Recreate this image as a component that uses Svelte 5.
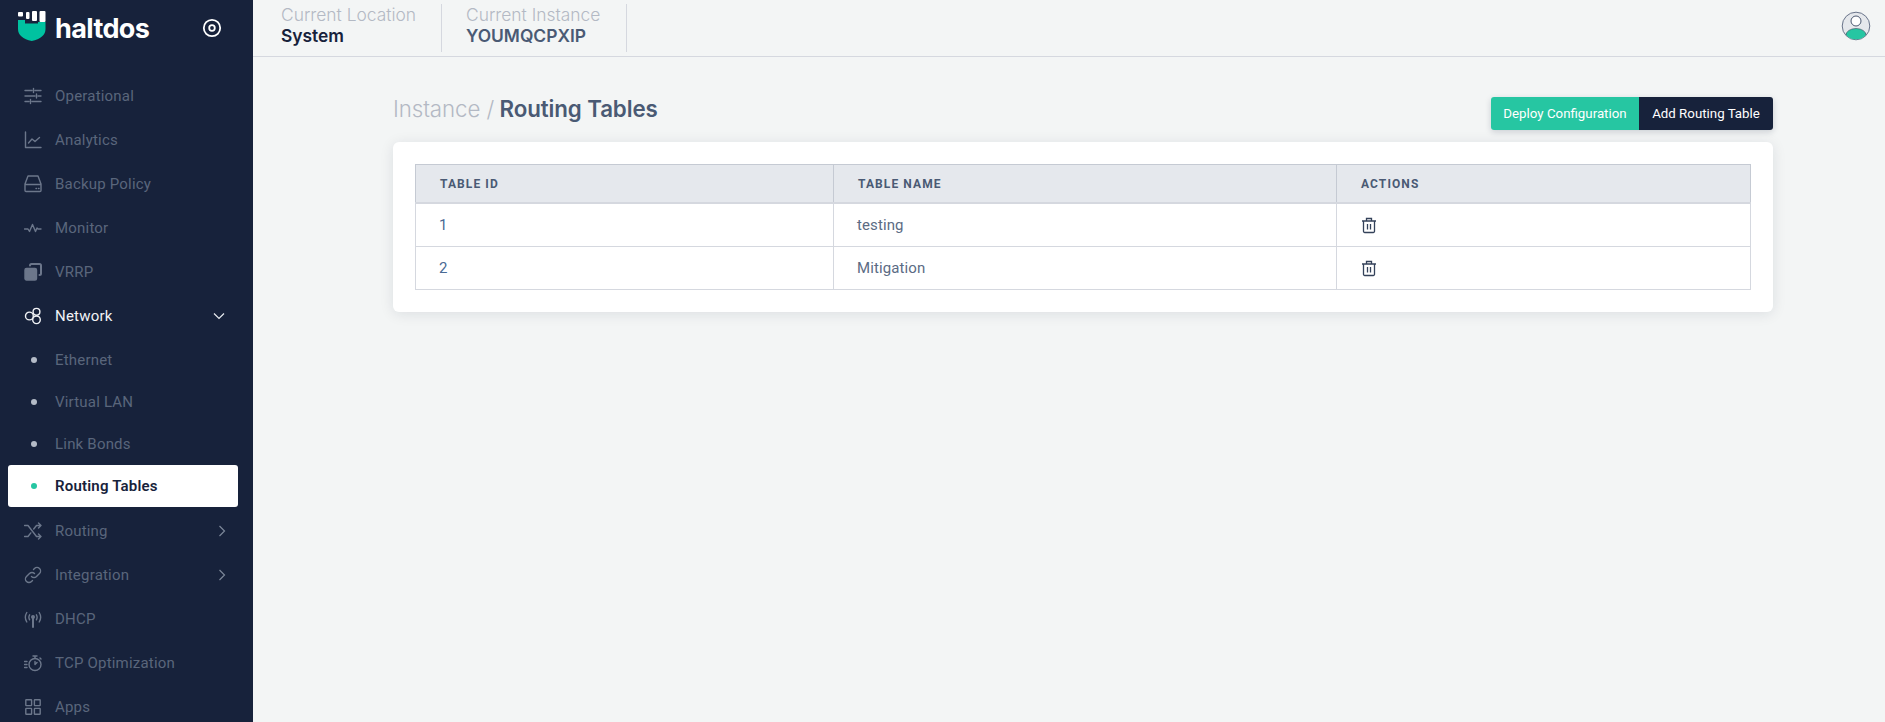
<script lang="ts">
    type Item = { label: string; icon: string; chevron?: string; active?: boolean };

    const topItems: Item[] = [
        { label: 'Operational', icon: 'sliders' },
        { label: 'Analytics', icon: 'chart' },
        { label: 'Backup Policy', icon: 'drive' },
        { label: 'Monitor', icon: 'pulse' },
        { label: 'VRRP', icon: 'copy' },
    ];
    const subItems = ['Ethernet', 'Virtual LAN', 'Link Bonds', 'Routing Tables'];
    const bottomItems: Item[] = [
        { label: 'Routing', icon: 'shuffle', chevron: 'right' },
        { label: 'Integration', icon: 'link', chevron: 'right' },
        { label: 'DHCP', icon: 'antenna' },
        { label: 'TCP Optimization', icon: 'timer' },
        { label: 'Apps', icon: 'grid' },
    ];
    const rows = [
        { id: 1, name: 'testing' },
        { id: 2, name: 'Mitigation' },
    ];
</script>

{#snippet navIcon(name: string)}
    <svg class="nav-icon" viewBox="0 0 18 18" fill="none" stroke="currentColor" stroke-width="1.400" stroke-linecap="round" stroke-linejoin="round">
        {#if name === 'sliders'}
            <path d="M1 3.500h7M11 3.500h6M1 9h10M14 9h3M1 14.500h4M8 14.500h9M9.500 1.500v4M12.500 7v4M6.500 12.500v4" />
        {:else if name === 'chart'}
            <path d="M1.500 1v15.500h15.500M4.500 12l3.500-4 3 2.500 4.500-4" />
        {:else if name === 'drive'}
            <path d="M4 1h10l3 8v6.500a1 1 0 0 1-1 1H2a1 1 0 0 1-1-1V9zM1 9.500h16M12 13.500h.5M14.500 13.500h.5" />
        {:else if name === 'pulse'}
            <path d="M.5 10h3.500l1.500 2.500 3-7 3 7 1.500-3.500 1 1h3" />
        {:else if name === 'copy'}
            <path d="M6 2.500a1.500 1.500 0 0 1 1.500-1.500h8a1.500 1.500 0 0 1 1.500 1.500v8a1.500 1.500 0 0 1-1.500 1.500" stroke-width="2" />
            <rect x="1" y="5.500" width="11.500" height="11.500" rx="1.500" fill="currentColor" />
        {:else if name === 'network'}
            <circle cx="12.500" cy="4.800" r="3.400" />
            <circle cx="12.500" cy="12.800" r="3.800" />
            <circle cx="5.400" cy="9" r="3.900" />
        {:else if name === 'shuffle'}
            <path d="M.5 3.500h3.500l8.500 11h4.500M.5 14.500h3.500l2.800-3.600M9.700 7l2.800-3.500h4.500M14.500 1l2.500 2.500-2.500 2.500M14.500 12l2.500 2.500-2.500 2.500" />
        {:else if name === 'link'}
            <path d="M7.500 10.500a3.500 3.500 0 0 0 5 0l3-3a3.500 3.500 0 0 0-5-5l-1 1M10.500 7.500a3.500 3.500 0 0 0-5 0l-3 3a3.500 3.500 0 0 0 5 5l1-1" />
        {:else if name === 'antenna'}
            <path d="M9 8v9" stroke-width="2" />
            <path d="M2.800 2.500a9 9 0 0 0 0 9.500M15.200 2.500a9 9 0 0 1 0 9.500M5.600 4.800a5 5 0 0 0 0 5M12.400 4.800a5 5 0 0 1 0 5" />
            <circle cx="9" cy="7" r="1.300" fill="currentColor" />
        {:else if name === 'timer'}
            <circle cx="11" cy="10.500" r="6" />
            <path d="M11 7.500v3l2-2M9 2h4M11 2v2.500M16 4l1 1M.5 7.500H3M.5 10.500H3M.5 13.500H3" />
        {:else if name === 'grid'}
            <rect x="1.800" y="1.800" width="5.800" height="5.800" rx=".5" />
            <rect x="10.400" y="1.800" width="5.800" height="5.800" rx=".5" />
            <rect x="1.800" y="10.400" width="5.800" height="5.800" rx=".5" />
            <rect x="10.400" y="10.400" width="5.800" height="5.800" rx=".5" />
        {/if}
    </svg>
{/snippet}

{#snippet navRow(item: Item)}
    <div class="nav-row">
        {@render navIcon(item.icon)}
        <span class="nav-label">{item.label}</span>
        {#if item.chevron === 'right'}
            <svg class="chevron" viewBox="0 0 10 14" fill="none" stroke="currentColor" stroke-width="1.200"><path d="M2.500 2 7.500 7l-5 5" /></svg>
        {/if}
    </div>
{/snippet}

<div class="layout">
    <aside class="sidebar">
        <div class="brand">
            <svg class="logo" viewBox="0 0 28 30">
                <path d="M0 9h7v3.500h13V11h7.500v7c0 6-5 10-13.700 12C5 28 0 24 0 18z" fill="#00c2a0" />
                <rect x="0" y="1" width="5" height="4.500" rx="1" fill="#fff" />
                <rect x="8" y="1" width="3.500" height="7" rx="1" fill="#fff" />
                <rect x="14" y="0" width="5" height="10" rx="1" fill="#fff" />
                <rect x="21.500" y="0" width="6" height="11" rx="1" fill="#fff" />
            </svg>
            <span class="brand-name">haltdos</span>
            <svg class="target" viewBox="0 0 20 20" fill="none" stroke="#fff">
                <circle cx="10" cy="10" r="8.200" stroke-width="1.800" />
                <circle cx="10" cy="10" r="2.800" stroke-width="1.800" />
            </svg>
        </div>
        <nav class="nav">
            {#each topItems as item}
                {@render navRow(item)}
            {/each}
            <div class="nav-row open">
                {@render navIcon('network')}
                <span class="nav-label">Network</span>
                <svg class="chevron" viewBox="0 0 14 10" fill="none" stroke="currentColor" stroke-width="1.200"><path d="M2 2.500 7 7.500l5-5" /></svg>
            </div>
            <div class="sub">
                {#each subItems as sub, i}
                    <div class="sub-row" class:active={i === 3}>
                        <span class="dot"></span>
                        <span>{sub}</span>
                    </div>
                {/each}
            </div>
            {#each bottomItems as item}
                {@render navRow(item)}
            {/each}
        </nav>
    </aside>

    <div class="main">
        <header class="topbar">
            <div class="crumb">
                <span class="crumb-title">Current Location</span>
                <span class="crumb-value">System</span>
            </div>
            <div class="crumb">
                <span class="crumb-title">Current Instance</span>
                <span class="crumb-value muted">YOUMQCPXIP</span>
            </div>
            <svg class="avatar" viewBox="0 0 30 30">
                <circle cx="15" cy="15" r="13.800" fill="#e5e8ec" stroke="#69748a" stroke-width="1" />
                <clipPath id="avatar-clip"><circle cx="15" cy="15" r="13.300" /></clipPath>
                <ellipse cx="15" cy="24" rx="10" ry="6.500" fill="#26c6a2" stroke="#3c4a60" stroke-width=".6" clip-path="url(#avatar-clip)" />
                <circle cx="15" cy="10" r="5" fill="#fff" stroke="#4b5870" stroke-width="1" />
            </svg>
        </header>

        <section class="content">
            <div class="title-row">
                <h1><span class="light">Instance /</span> Routing Tables</h1>
                <div class="actions">
                    <button class="btn green">Deploy Configuration</button>
                    <button class="btn dark">Add Routing Table</button>
                </div>
            </div>
            <div class="card">
                <table>
                    <thead>
                        <tr>
                            <th class="col-id">TABLE ID</th>
                            <th class="col-name">TABLE NAME</th>
                            <th>ACTIONS</th>
                        </tr>
                    </thead>
                    <tbody>
                        {#each rows as row}
                            <tr>
                                <td class="id">{row.id}</td>
                                <td>{row.name}</td>
                                <td>
                                    <svg class="trash" viewBox="0 0 16 16" fill="none" stroke="#34425a" stroke-width="1.300">
                                        <path d="M1 3.500h14M5.500 3.500V1h5v2.500M2.500 3.500v10.300A1.200 1.200 0 0 0 3.700 15h8.600a1.200 1.200 0 0 0 1.200-1.200V3.500M6.500 6.500v5.500M9.500 6.500v5.500" />
                                    </svg>
                                </td>
                            </tr>
                        {/each}
                    </tbody>
                </table>
            </div>
        </section>
    </div>
</div>

<style>
    :global(body) {
        margin: 0;
        background: #f3f5f5;
        font-family: Roboto, "Liberation Sans", sans-serif;
    }
    .layout {
        display: flex;
        height: 722px;
        overflow: hidden;
    }
    .sidebar {
        width: 253px;
        flex: none;
        background: #17223b;
        overflow: hidden;
    }
    .brand {
        display: flex;
        align-items: center;
        height: 56px;
        padding-left: 18px;
    }
    .logo {
        width: 28px;
        height: 30px;
        flex: none;
        margin-top: -4px;
    }
    .brand-name {
        color: #fff;
        font-size: 27px;
        font-weight: 700;
        margin-left: 9px;
        width: 147px;
        font-family: Inter, Roboto, sans-serif;
        letter-spacing: -0.6px;
    }
    .target {
        width: 20px;
        height: 20px;
        margin-top: -1px;
    }
    .nav {
        padding-top: 17.500px;
    }
    .nav-row {
        display: flex;
        align-items: center;
        height: 44.100px;
        padding-left: 24px;
        color: #5a667b;
        font-size: 15px;
        letter-spacing: 0.2px;
    }
    .nav-row.open {
        color: #f1f3f6;
    }
    .nav-icon {
        width: 18px;
        height: 18px;
        flex: none;
        margin-right: 13px;
        color: #6c778b;
    }
    .open .nav-icon {
        color: #f1f3f6;
    }
    .nav-label {
        flex: 1;
    }
    .chevron {
        width: 14px;
        height: 14px;
        margin-right: 24px;
        color: #7c8799;
    }
    .open .chevron {
        margin-right: 27px;
        color: #e8ebf0;
    }
    .sub {
        margin-top: 1px;
        margin-bottom: 1.500px;
    }
    .sub-row {
        display: flex;
        align-items: center;
        height: 42px;
        margin: 0 15px 0 8px;
        padding-left: 23px;
        color: #5a667b;
        font-size: 15px;
        letter-spacing: 0.2px;
        border-radius: 3px;
    }
    .dot {
        width: 6px;
        height: 6px;
        border-radius: 50%;
        background: #b4bbc7;
        margin-right: 18px;
    }
    .sub-row.active {
        background: #fff;
        color: #17223b;
        font-weight: 600;
    }
    .sub-row.active .dot {
        background: #26c6a2;
    }
    .main {
        flex: 1;
        min-width: 0;
    }
    .topbar {
        display: flex;
        align-items: stretch;
        height: 56px;
        border-bottom: 1px solid #d5d8df;
        box-sizing: content-box;
        padding-left: 28px;
        position: relative;
    }
    .crumb {
        display: flex;
        flex-direction: column;
        justify-content: flex-start;
        width: 160px;
        margin: 4px 24px 4px 0;
        border-right: 1px solid #d5d8df;
        line-height: 21px;
    }
    .crumb-title {
        font-family: Inter, Roboto, sans-serif;
        color: #b3b9c4;
        font-size: 17.400px;
        font-weight: 300;
    }
    .crumb-value {
        font-family: Inter, Roboto, sans-serif;
        color: #17223b;
        font-size: 17.400px;
        font-weight: 600;
    }
    .crumb-value.muted {
        color: #4a5a74;
    }
    .avatar {
        width: 30px;
        height: 30px;
        margin: 11px 14px 0 auto;
    }
    .content {
        padding: 40px 112px 0 140px;
    }
    .title-row {
        display: flex;
        justify-content: space-between;
        height: 45px;
    }
    h1 {
        margin: -2px 0 0;
        font-family: Inter, Roboto, sans-serif;
        font-size: 22.300px;
        line-height: 27px;
        font-weight: 600;
        color: #4a5a74;
        letter-spacing: -0.1px;
    }
    .light {
        font-weight: 300;
        color: #b3b9c4;
    }
    .actions {
        display: flex;
        height: 33px;
        box-shadow: 0 2px 6px rgba(23, 34, 59, 0.18);
        border-radius: 3px;
    }
    .btn {
        border: none;
        height: 33px;
        font-family: Roboto, sans-serif;
        font-size: 13.300px;
        padding: 0;
        color: #fff;
    }
    .green {
        width: 148px;
        background: #26c6a2;
        border-radius: 3px 0 0 3px;
    }
    .dark {
        width: 134px;
        background: #17223b;
        border-radius: 0 3px 3px 0;
    }
    .card {
        background: #fff;
        border-radius: 6px;
        padding: 22px;
        box-shadow: 0 2px 14px rgba(23, 34, 59, 0.1);
    }
    table {
        width: 100%;
        border-collapse: collapse;
        table-layout: fixed;
    }
    th {
        height: 37px;
        background: #e5e8ed;
        border: 1px solid #c5cad3;
        border-bottom: 2px solid #d5d8df;
        text-align: left;
        padding: 0 0 0 24px;
        font-size: 12px;
        font-weight: 700;
        letter-spacing: 1.100px;
        color: #4a5a74;
    }
    .col-id {
        width: 393px;
    }
    .col-name {
        width: 478px;
    }
    td {
        height: 42px;
        border: 1px solid #d5d8df;
        padding: 0 0 0 23px;
        font-size: 15px;
        letter-spacing: 0.1px;
        color: #5b6b84;
    }
    td.id {
        color: #4a6a94;
    }
    .trash {
        display: block;
        width: 16px;
        height: 17px;
        margin: 1px 0 0 1px;
    }
</style>
